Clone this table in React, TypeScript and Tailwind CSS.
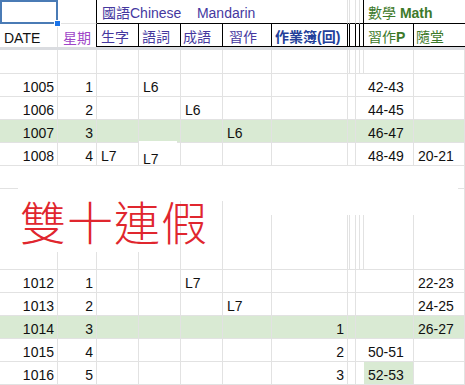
import React from "react";

type Row = { cells: string[]; green?: boolean; greenIdx?: number[] };

const rowsTop: Row[] = [
  { cells: ["1005", "1", "", "L6", "", "", "", "", "", "", "", "42-43", ""] },
  { cells: ["1006", "2", "", "", "L6", "", "", "", "", "", "", "44-45", ""] },
  { cells: ["1007", "3", "", "", "", "L6", "", "", "", "", "", "46-47", ""], green: true },
  { cells: ["1008", "4", "L7", "L7", "", "", "", "", "", "", "", "48-49", "20-21"] },
];

const rowsBottom: Row[] = [
  { cells: ["1012", "1", "", "", "L7", "", "", "", "", "", "", "", "22-23"] },
  { cells: ["1013", "2", "", "", "", "L7", "", "", "", "", "", "", "24-25"] },
  { cells: ["1014", "3", "", "", "", "", "1", "", "", "", "", "", "26-27"], green: true },
  { cells: ["1015", "4", "", "", "", "", "2", "", "", "", "", "50-51", ""] },
  { cells: ["1016", "5", "", "", "", "", "3", "", "", "", "", "52-53", ""], greenIdx: [11] },
];

const RIGHT = [0, 1, 6];

function DataRow({ row, special }: { row: Row; special?: boolean }) {
  return (
    <>
      {row.cells.map((v, i) => {
        const green = row.green || (row.greenIdx && row.greenIdx.includes(i));
        const right = RIGHT.includes(i);
        const isSpecial = special && i === 3;
        return (
          <div
            key={i}
            className={`relative h-[23px] border-r border-b border-[#e2e2e2] flex items-end pb-[1px] whitespace-nowrap text-[14px] leading-[16px] text-[#111] ${
              green ? "bg-[#d9ead3]" : "bg-white"
            } ${right ? "justify-end pr-[3px]" : "justify-start pl-[4px]"}`}
          >
            {isSpecial ? (
              <>
                <div className="absolute left-0 top-[-2px] w-[38px] h-[3px] bg-white" />
                <span className="relative top-[3px]">{v}</span>
              </>
            ) : (
              v
            )}
          </div>
        );
      })}
    </>
  );
}

export default function App() {
  return (
    <div className="relative w-[465px] h-[385px] overflow-hidden bg-white font-[family-name:'Liberation_Sans','Noto_Sans_CJK_TC',sans-serif]">
      {/* Header rows */}
      <div className="grid grid-cols-[58px_39px_42px_42px_42px_49px_76px_2px_6px_4px_4px_50px_51px]">
        {/* Row 1 */}
        <div className="h-[24px] border-r border-b border-[#e2e2e2]" />
        <div className="h-[24px] border-r border-r-black border-b border-b-[#e2e2e2]" />
        <div className="col-span-5 h-[24px] border-r border-r-[#e2e2e2] border-b border-b-black flex items-end pb-[2px] pl-[5px] text-[14px] leading-[16px] text-[#45389f] whitespace-pre">
          {"國語Chinese    Mandarin"}
        </div>
        <div className="h-[24px] border-r border-r-[#e2e2e2] border-b border-b-black" />
        <div className="h-[24px] border-r border-r-[#e2e2e2] border-b border-b-black" />
        <div className="h-[24px] border-r border-r-[#e2e2e2] border-b border-b-black" />
        <div className="h-[24px] border-r border-r-black border-b border-b-black" />
        <div className="col-span-2 h-[24px] border-b border-b-black flex items-end pb-[2px] pl-[4px] text-[14px] leading-[16px] text-[#3d7a2a] whitespace-pre">
          數學 <span className="font-bold">Math</span>
        </div>

        {/* Row 2 */}
        <div className="h-[23px] border-r border-[#e2e2e2] flex items-end pb-[1px] pl-[4px] text-[14px] leading-[16px] text-[#111]">
          DATE
        </div>
        <div className="h-[23px] border-r border-r-black flex items-end pb-[1px] pl-[5px] text-[14px] leading-[16px] text-[#a046c8]">
          星期
        </div>
        <div className="h-[23px] border-r border-b border-black flex items-end pb-[1px] pl-[4px] text-[14px] leading-[16px] text-[#45389f]">
          生字
        </div>
        <div className="h-[23px] border-r border-b border-black flex items-end pb-[1px] pl-[3px] text-[14px] leading-[16px] text-[#45389f]">
          語詞
        </div>
        <div className="h-[23px] border-r border-b border-black flex items-end pb-[1px] pl-[2px] text-[14px] leading-[16px] text-[#45389f]">
          成語
        </div>
        <div className="h-[23px] border-r border-b border-black flex items-end pb-[1px] pl-[6px] text-[14px] leading-[16px] text-[#45389f]">
          習作
        </div>
        <div className="h-[23px] border-r border-b border-black flex items-end pb-[1px] pl-[3px] text-[14px] leading-[16px] font-bold text-[#233f9a] whitespace-nowrap">
          作業簿(回)
        </div>
        <div className="h-[23px] border-r border-b border-black" />
        <div className="h-[23px] border-r border-b border-black" />
        <div className="h-[23px] border-r border-b border-black" />
        <div className="h-[23px] border-r border-b border-black" />
        <div className="h-[23px] border-r border-b border-black flex items-end pb-[1px] pl-[4px] text-[14px] leading-[16px] text-[#3d7a2a] whitespace-nowrap">
          習作<span className="font-bold">P</span>
        </div>
        <div className="h-[23px] border-b border-black flex items-end pb-[1px] pl-[2px] text-[14px] leading-[16px] text-[#3d7a2a]">
          隨堂
        </div>
      </div>

      {/* Frozen divider */}
      <div className="h-[3px] bg-[#dadce0]" />

      {/* Body */}
      <div className="grid grid-cols-[58px_39px_42px_42px_42px_49px_76px_2px_6px_4px_4px_50px_51px]">
        {Array.from({ length: 13 }).map((_, i) => (
          <div key={i} className="h-[24px] border-r border-b border-[#e2e2e2]" />
        ))}
        {rowsTop.map((r, i) => (
          <DataRow key={i} row={r} special={i === 3} />
        ))}
      </div>

      {/* Middle region with floating picture */}
      <div className="relative h-[104px]">
        <div className="grid h-full grid-cols-[58px_39px_42px_42px_42px_49px_76px_2px_6px_4px_4px_50px_51px]">
          {Array.from({ length: 13 }).map((_, i) => (
            <div key={i} className="h-full border-r border-b border-[#e2e2e2]" />
          ))}
        </div>
        <div className="absolute left-0 right-0 top-[22px] h-px bg-[#e2e2e2]" />
        <div className="absolute left-[18px] top-0 w-[440px] h-[35px] bg-white" />
        <div className="absolute left-[232px] top-0 w-[226px] h-[49px] bg-white" />
        <div className="absolute left-[18px] top-0 w-[160px] h-[86px] bg-white" />
        <div className="absolute left-[20px] top-[30px] text-[46px] leading-[48px] font-light text-[#e0262e] font-[family-name:'Noto_Sans_CJK_TC',sans-serif] tracking-[1px]">
          雙十連假
        </div>
      </div>

      <div className="grid grid-cols-[58px_39px_42px_42px_42px_49px_76px_2px_6px_4px_4px_50px_51px]">
        {rowsBottom.map((r, i) => (
          <DataRow key={i} row={r} />
        ))}
      </div>

      {/* Selection on A1 */}
      <div className="absolute left-0 top-0 w-[58px] h-[24px] border-2 border-[#4a7bb5]" />
      <div className="absolute left-[54px] top-[20px] w-[7px] h-[7px] bg-[#1a73e8] border border-white" />
    </div>
  );
}
